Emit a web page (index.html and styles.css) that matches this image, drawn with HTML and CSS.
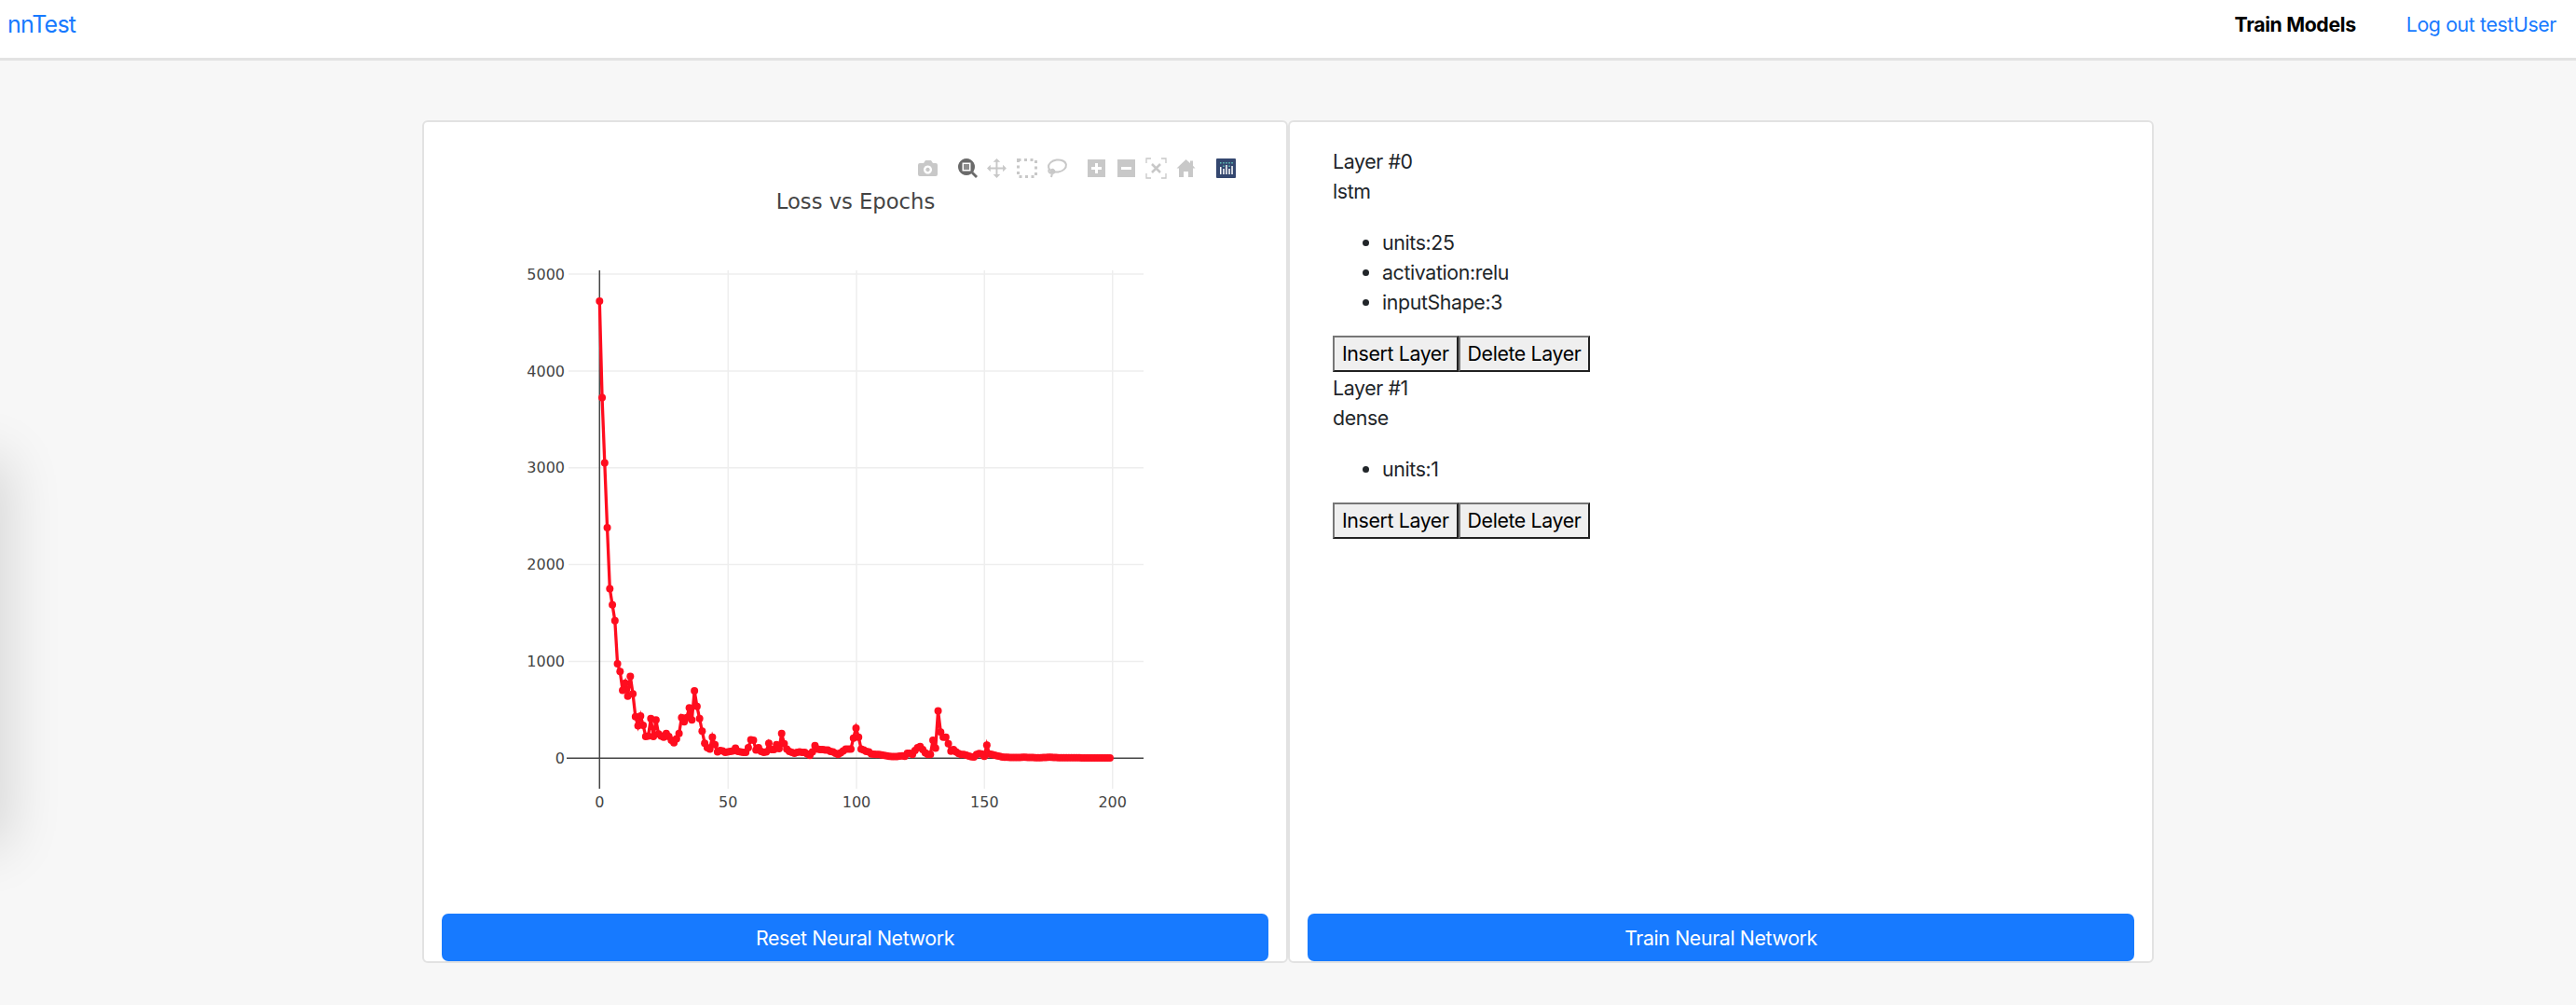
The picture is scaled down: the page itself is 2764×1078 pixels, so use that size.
FILE: index.html
```html
<!DOCTYPE html>
<html lang="en">
<head>
  <meta charset="UTF-8">
  <meta name="viewport" content="width=device-width, initial-scale=1.0">
  <title>nnTest</title>
  <link rel="stylesheet" href="styles.css">
</head>
<body>
  <div class="edge-shadow"></div>
  <nav class="navbar">
    <a class="brand" href="#">nnTest</a>
    <div class="nav-links">
      <a class="nav-current" href="#">Train Models</a>
      <a class="nav-link" href="#">Log out testUser</a>
    </div>
  </nav>
  <main class="cards">
    <section class="card">
      <div class="card-top">
        <svg id="lossChart" class="chart" viewBox="0 0 924 840" width="924" height="840">
          <!-- toolbar -->
          <g class="tool" transform="translate(530,41)">
            <path fill-rule="evenodd" d="M2 3h4l2-3h6l2 3h3a2 2 0 0 1 2 2v10a2 2 0 0 1-2 2H2a2 2 0 0 1-2-2V5a2 2 0 0 1 2-2zM10.500 5.500a4.500 4.500 0 1 0 .01 0zM10.500 7.800a2.200 2.200 0 1 1-.01 0z"/>
          </g>
          <g class="tool-active" transform="translate(573,39)">
            <path fill-rule="evenodd" d="M9 0a9 9 0 1 1-.01 0zM4.500 4.500v9h9v-9z"/>
            <rect class="tool-active-inner" x="6" y="6" width="6" height="6"/>
            <path d="M14 16l2-2 5 5-2 2z"/>
          </g>
          <g class="tool" transform="translate(604,39)">
            <path d="M11 0l4 4h-3v6h6V7l4 4-4 4v-3h-6v6h3l-4 4-4-4h3v-6H4v3l-4-4 4-4v3h6V4H7z" transform="scale(.95)"/>
          </g>
          <rect class="tool-dash" x="637.500" y="40.500" width="19" height="18"/>
          <g class="tool-line" transform="translate(668,39)">
            <ellipse cx="11.500" cy="8" rx="9.500" ry="6.500" transform="rotate(-8 11.500 8)"/>
            <path d="M3 11c-2 3 0 5 3 5s3-3 1-4-3 2-1 4l-1 4"/>
          </g>
          <g class="tool" transform="translate(712,40)">
            <path fill-rule="evenodd" d="M0 0h19v19H0zM8 4v4H4v3h4v4h3v-4h4V8h-4V4z"/>
          </g>
          <g class="tool" transform="translate(744,40)">
            <path fill-rule="evenodd" d="M0 0h19v19H0zM4 8v3h11V8z"/>
          </g>
          <g class="tool-line thin" transform="translate(775,39)">
            <path d="M0 5V0h5M16 0h5v5M21 16v5h-5M5 21H0v-5"/>
            <path class="thick" d="M6 6l9 9M15 6l-9 9"/>
          </g>
          <g class="tool" transform="translate(808,40)">
            <path d="M9.500 0L14 4V1.500h3v5.300l2.500 2.700H17V19h-5v-6H7v6H2V9.500H-.5z"/>
          </g>
          <g transform="translate(850,39)">
            <rect class="logo-bg" width="21" height="21" rx="1"/>
            <path class="logo-dots" d="M4 4h1.500v1.500H4zM7.200 4h1.500v1.500H7.200zM10.200 4h1.500v1.500h-1.500zM13.300 4h1.500v1.500h-1.500zM16.300 4h1.500v1.500h-1.500zM7.200 7.500h1.500V9H7.200zM13.300 7.500h1.500V9h-1.500z"/>
            <path class="logo-bars" d="M4 9h1.500v8H4zM7.200 11h1.500v6H7.200zM10.200 7h1.500v10h-1.500zM13.300 11h1.500v6h-1.500zM16.300 8h1.500v9h-1.500z"/>
          </g>

          <text class="chart-title" x="463" y="93" text-anchor="middle">Loss vs Epochs</text>

          <!-- grid -->
          <g class="grid">
            <path d="M155 163H772M155 267H772M155 370.700H772M155 474.600H772M155 578.400H772"/>
            <path d="M326.300 159V715M464 159V715M601.300 159V715M738.700 159V715"/>
          </g>
          <path class="zero-line" d="M153 682.300H772M188.300 159V715"/>

          <g class="tick" text-anchor="end">
            <text x="151" y="169">5000</text>
            <text x="151" y="273">4000</text>
            <text x="151" y="376">3000</text>
            <text x="151" y="480">2000</text>
            <text x="151" y="584">1000</text>
            <text x="151" y="688">0</text>
          </g>
          <g class="tick" text-anchor="middle">
            <text x="188.300" y="735">0</text>
            <text x="326.300" y="735">50</text>
            <text x="464" y="735">100</text>
            <text x="601.300" y="735">150</text>
            <text x="738.700" y="735">200</text>
          </g>
          <g id="lossSeries"></g>
        </svg>
      </div>
      <button class="wide-btn" type="button">Reset Neural Network</button>
    </section>

    <section class="card">
      <div class="card-top layers">
        <div class="layer">
          <div>Layer #0</div>
          <div>lstm</div>
          <ul class="layer-opts">
            <li>units:25</li>
            <li>activation:relu</li>
            <li>inputShape:3</li>
          </ul>
          <div class="layer-btns">
            <button type="button">Insert Layer</button><button type="button">Delete Layer</button>
          </div>
        </div>
        <div class="layer">
          <div>Layer #1</div>
          <div>dense</div>
          <ul class="layer-opts">
            <li>units:1</li>
          </ul>
          <div class="layer-btns">
            <button type="button">Insert Layer</button><button type="button">Delete Layer</button>
          </div>
        </div>
      </div>
      <button class="wide-btn" type="button">Train Neural Network</button>
    </section>
  </main>
  <script src="chart.js"></script>
</body>
</html>
```

FILE: styles.css
```css
* {
  box-sizing: border-box;
}

html, body {
  height: 100%;
}

body {
  margin: 0;
  background-color: #f7f7f7;
  color: #212529;
  font-family: Inter, "Liberation Sans", sans-serif;
  font-size: 21.33px;
  line-height: 32px;
  letter-spacing: -0.38px;
  overflow: hidden;
}

a {
  text-decoration: none;
}

.edge-shadow {
  position: fixed;
  left: -50px;
  top: 500px;
  width: 50px;
  height: 400px;
  box-shadow: 0 0 60px 8px rgba(0, 0, 0, 0.14);
}

.navbar {
  display: flex;
  justify-content: space-between;
  align-items: center;
  height: 65px;
  padding: 0 21px 10px 8px;
  background-color: #fff;
  border-bottom: 3px solid #e3e3e3;
}

.brand {
  color: #177aff;
  font-size: 25px;
  letter-spacing: -0.8px;
}

.nav-links {
  display: flex;
  gap: 54px;
}

.nav-current {
  color: #000;
  font-weight: 700;
}

.nav-link {
  color: #177aff;
}

.cards {
  display: flex;
  justify-content: center;
  padding-top: 64px;
}

.card {
  display: flex;
  flex-direction: column;
  width: 929px;
  height: 904px;
  padding: 0 19px;
  background-color: #fff;
  border: 2px solid #e2e2e2;
  border-radius: 6px;
}

.card-top {
  flex: 1;
}

.chart {
  display: block;
  margin: 0 -19px;
}

.layers {
  padding: 26px 0 0 27px;
}

.layer-opts {
  margin: 22.5px 0 20px;
  padding-left: 53px;
}

.layer-btns {
  display: flex;
  height: 39px;
  margin-bottom: 1.5px;
}

.layer-btns button {
  padding: 0 8px;
  font-family: inherit;
  font-size: 21.33px;
  letter-spacing: inherit;
  color: #000;
  background-color: #efefef;
  border: 2px outset #767676;
}

.wide-btn {
  height: 51px;
  font-family: inherit;
  font-size: 21.33px;
  letter-spacing: inherit;
  color: #fff;
  background-color: #177aff;
  border: none;
  border-radius: 7px;
}

/* plot */
.chart-title {
  font-family: "DejaVu Sans", sans-serif;
  font-size: 22.67px;
  letter-spacing: 0;
  fill: #444;
}

.tick {
  font-family: "DejaVu Sans", sans-serif;
  font-size: 16px;
  letter-spacing: 0;
  fill: #444;
}

.grid {
  fill: none;
  stroke: #eee;
  stroke-width: 1.5;
}

.zero-line {
  fill: none;
  stroke: #444;
  stroke-width: 1.5;
}

.loss-line {
  fill: none;
  stroke: #ff0d1f;
  stroke-width: 3.3;
}

.loss-dot {
  fill: #ff0d1f;
}

/* toolbar icons */
.tool {
  fill: #c8c8c8;
}

.tool-active {
  fill: #6a6a6a;
}

.tool-active-inner {
  fill: #8e8e8e;
}

.tool-dash {
  fill: none;
  stroke: #c8c8c8;
  stroke-width: 3;
  stroke-dasharray: 3 3.500;
}

.tool-line {
  fill: none;
  stroke: #c8c8c8;
  stroke-width: 2;
}

.tool-line.thin {
  stroke-width: 1.300;
}

.tool-line .thick {
  stroke-width: 2.500;
}

.logo-bg {
  fill: #34476f;
}

.logo-dots {
  fill: #5fc4b8;
}

.logo-bars {
  fill: #fff;
}
```

FILE: chart.js
```js
// loss per epoch, 200 epochs
const lossData = [
  4720, 3725, 3050, 2380, 1750, 1585, 1420, 975, 895, 700,
  775, 640, 845, 665, 430, 335, 435, 340, 225, 230,
  410, 225, 395, 250, 230, 218, 255, 225, 185, 160,
  200, 255, 420, 375, 420, 520, 395, 695, 535, 410,
  280, 155, 110, 95, 218, 140, 65, 80, 75, 60,
  65, 70, 75, 105, 70, 65, 60, 60, 110, 190,
  185, 85, 110, 70, 60, 65, 155, 90, 90, 140,
  100, 255, 150, 95, 70, 60, 50, 60, 65, 60,
  60, 45, 30, 65, 130, 95, 90, 90, 85, 85,
  70, 65, 50, 40, 55, 75, 95, 95, 95, 208,
  310, 218, 95, 85, 70, 65, 45, 42, 40, 38,
  35, 30, 25, 20, 18, 18, 18, 22, 25, 20,
  50, 50, 38, 80, 110, 120, 90, 55, 38, 40,
  185, 105, 490, 270, 218, 218, 150, 72, 90, 65,
  48, 40, 38, 32, 22, 16, 12, 38, 48, 45,
  20, 135, 45, 38, 32, 25, 20, 13, 10, 9,
  8, 8, 7, 7, 8, 10, 9, 8, 7, 7,
  6, 6, 6, 7, 8, 10, 9, 8, 7, 6,
  6, 5, 5, 5, 5, 5, 5, 5, 4, 4,
  4, 4, 4, 4, 3, 3, 3, 3, 3, 3
];

const svgNS = 'http://www.w3.org/2000/svg';
const series = document.getElementById('lossSeries');

function xPos(epoch) {
  return 188.3 + epoch * 2.752;
}

function yPos(loss) {
  return 682.3 - loss * 0.10386;
}

const line = document.createElementNS(svgNS, 'polyline');
line.setAttribute('class', 'loss-line');
line.setAttribute('points', lossData.map((v, i) => xPos(i) + ',' + yPos(v)).join(' '));
series.appendChild(line);

lossData.forEach((v, i) => {
  const dot = document.createElementNS(svgNS, 'circle');
  dot.setAttribute('class', 'loss-dot');
  dot.setAttribute('cx', xPos(i));
  dot.setAttribute('cy', yPos(v));
  dot.setAttribute('r', 4);
  series.appendChild(dot);
});
```
